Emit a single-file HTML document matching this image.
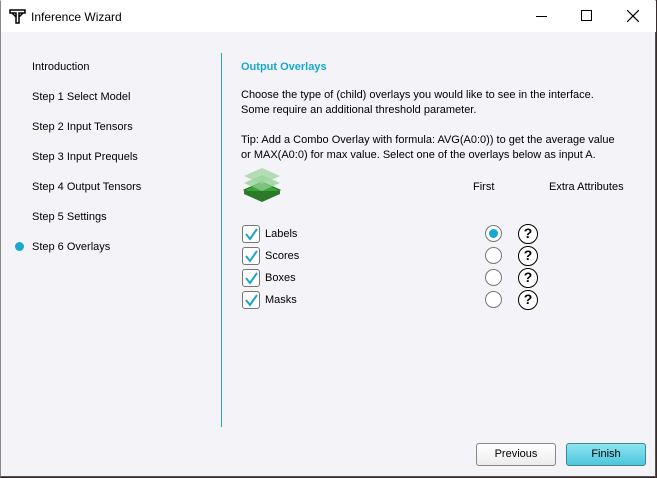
<!DOCTYPE html>
<html><head><style>
*{margin:0;padding:0;box-sizing:border-box}
body{width:657px;height:478px;background:#3a2a2a;font-family:"Liberation Sans",sans-serif;font-size:11px;color:#000;position:relative;overflow:hidden}
#win{position:absolute;left:0;top:0;width:656px;height:477px;background:#f3f3f8;border-top:1px solid #fff;border-right:1px solid #555;border-bottom:1px solid #555;border-left:1px solid #888}
#title{position:absolute;left:0;top:0;width:655px;height:31px;background:#fff}
.t{position:absolute;white-space:nowrap}
.side{left:31px;font-size:11px}
.cb{position:absolute;left:241px;width:18px;height:18px;border:1px solid #777;border-radius:3px;background:#fff}
.rad{position:absolute;left:484px;width:17px;height:17px;border:1px solid #777;border-radius:50%;background:#fff}
.q{position:absolute;left:517px;width:20px;height:20px;border:1.5px solid #000;border-radius:50%;background:#fff;font-weight:bold;font-size:14px;text-align:center;line-height:17px}
.btn{position:absolute;top:442px;height:23px;border-radius:3px;text-align:center;line-height:21px;font-size:11px}
</style></head><body>
<div id="win">
<div id="title">
<svg style="position:absolute;left:8px;top:7px" width="17" height="17" viewBox="0 0 17 17"><path d="M1 2h15v3H10v10H7V5H1z M3 5l4 4 M14 5l-4 4" fill="none" stroke="#000" stroke-width="1.5"/></svg>
<div class="t" style="left:30px;top:9px;font-size:12px">Inference Wizard</div>
<div class="t" style="left:535px;top:15px;width:11px;height:1px;background:#000"></div>
<div class="t" style="left:580px;top:9px;width:11px;height:11px;border:1px solid #000"></div>
<svg style="position:absolute;left:626px;top:9px" width="12" height="12"><path d="M0 0L12 12M12 0L0 12" stroke="#000" stroke-width="1.2"/></svg>
</div>
<div class="t side" style="top:60px">Introduction</div>
<div class="t side" style="top:90px">Step 1 Select Model</div>
<div class="t side" style="top:120px">Step 2 Input Tensors</div>
<div class="t side" style="top:150px">Step 3 Input Prequels</div>
<div class="t side" style="top:180px">Step 4 Output Tensors</div>
<div class="t side" style="top:210px">Step 5 Settings</div>
<div class="t side" style="top:240px">Step 6 Overlays</div>
<div class="t" style="left:14px;top:241px;width:9px;height:9px;border-radius:50%;background:#17a8d0"></div>
<div class="t" style="left:220px;top:52px;width:1px;height:374px;background:#2aa5b5"></div>
<div class="t" style="left:240px;top:60px;color:#17a8d0;font-weight:bold">Output Overlays</div>
<div class="t" style="left:240px;top:87px;line-height:15px">Choose the type of (child) overlays you would like to see in the interface.<br>Some require an additional threshold parameter.</div>
<div class="t" style="left:240px;top:132px;line-height:15px">Tip: Add a Combo Overlay with formula: AVG(A0:0)) to get the average value<br>or MAX(A0:0) for max value. Select one of the overlays below as input A.</div>
<svg style="position:absolute;left:241px;top:166px" width="40" height="38" viewBox="0 0 40 38"><path d="M2 23L20 15L38 23L20 31Z" fill="#3aa33a" stroke="#1e6e1e"/><path d="M2 24v3l18 8 18-8v-3" fill="#2a7a2a"/><path d="M2 16L20 8L38 16L20 24Z" fill="#8fd08f" opacity=".75"/><path d="M2 9L20 1L38 9L20 17Z" fill="#9ed49e" opacity=".75"/></svg>
<div class="t" style="left:472px;top:180px">First</div>
<div class="t" style="left:548px;top:180px">Extra Attributes</div>
<div class="cb" style="top:224px"></div><div class="cb" style="top:246px"></div><div class="cb" style="top:268px"></div><div class="cb" style="top:290px"></div>
<svg style="position:absolute;left:241px;top:224px" width="19" height="90"><g fill="none" stroke="#1aa3cc" stroke-width="2"><path d="M4 9l4 5 7-10"/><path d="M4 31l4 5 7-10"/><path d="M4 53l4 5 7-10"/><path d="M4 75l4 5 7-10"/></g></svg>
<div class="t" style="left:264px;top:227px">Labels</div>
<div class="t" style="left:264px;top:249px">Scores</div>
<div class="t" style="left:264px;top:271px">Boxes</div>
<div class="t" style="left:264px;top:293px">Masks</div>
<div class="rad" style="top:224px"><div style="position:absolute;left:3px;top:3px;width:9px;height:9px;border-radius:50%;background:#17a8d0"></div></div>
<div class="rad" style="top:246px"></div><div class="rad" style="top:268px"></div><div class="rad" style="top:290px"></div>
<div class="q" style="top:223px">?</div><div class="q" style="top:245px">?</div><div class="q" style="top:267px">?</div><div class="q" style="top:289px">?</div>
<div class="btn" style="left:475px;width:80px;border:1px solid #888;background:linear-gradient(#fff,#ececec)">Previous</div>
<div class="btn" style="left:565px;width:80px;border:1px solid #3a8a9a;background:linear-gradient(#8fe4f0,#4cc6dc)">Finish</div>
</div>
</body></html>
